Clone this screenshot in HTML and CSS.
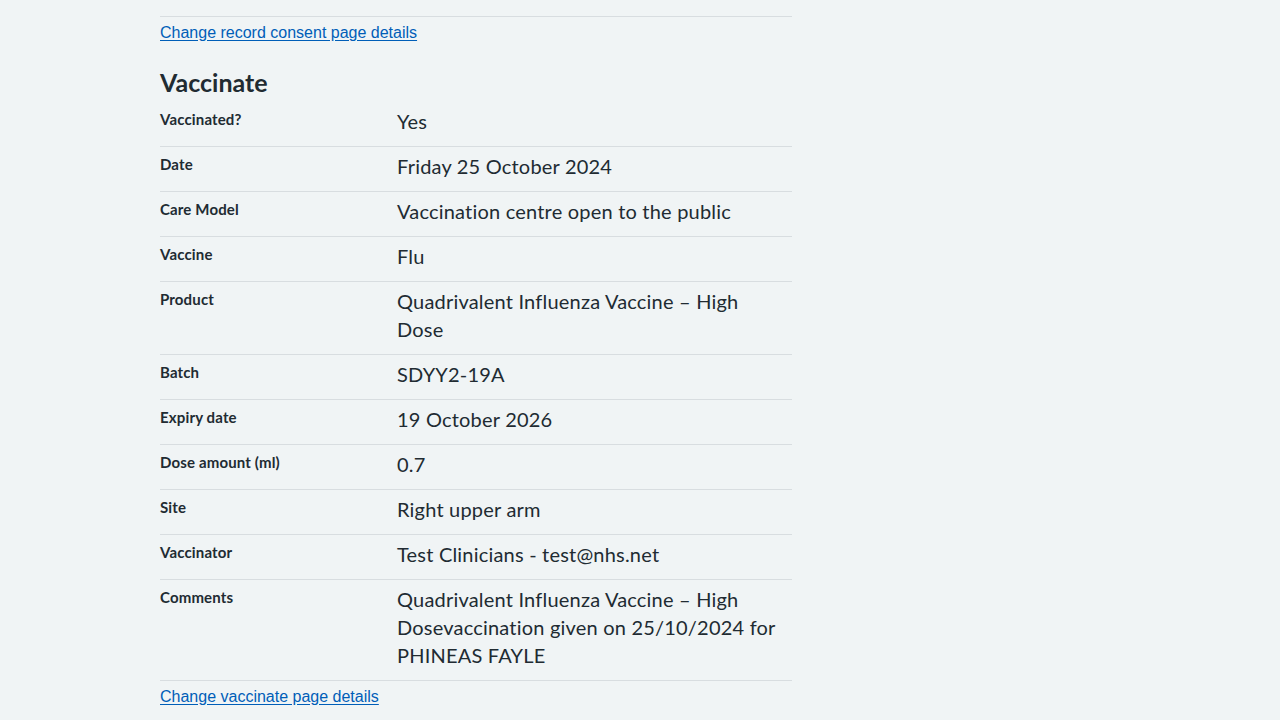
FILE: index.html
```html
<!DOCTYPE html>
<html lang="en">
<head>
<meta charset="utf-8">
<title>Check and confirm</title>
<link rel="stylesheet" href="styles.css">
</head>
<body>
<main class="page">
  <div class="link-block">
    <a class="change-link" href="#">Change record consent page details</a>
  </div>

  <h2 class="section-title">Vaccinate</h2>
  <dl class="summary">
    <div class="row"><dt class="key">Vaccinated?</dt><dd class="value">Yes</dd></div>
    <div class="row"><dt class="key">Date</dt><dd class="value">Friday 25 October 2024</dd></div>
    <div class="row"><dt class="key">Care Model</dt><dd class="value">Vaccination centre open to the public</dd></div>
    <div class="row"><dt class="key">Vaccine</dt><dd class="value">Flu</dd></div>
    <div class="row"><dt class="key">Product</dt><dd class="value">Quadrivalent Influenza Vaccine – High Dose</dd></div>
    <div class="row"><dt class="key">Batch</dt><dd class="value">SDYY2-19A</dd></div>
    <div class="row"><dt class="key">Expiry date</dt><dd class="value">19 October 2026</dd></div>
    <div class="row"><dt class="key">Dose amount (ml)</dt><dd class="value">0.7</dd></div>
    <div class="row"><dt class="key">Site</dt><dd class="value">Right upper arm</dd></div>
    <div class="row"><dt class="key">Vaccinator</dt><dd class="value">Test Clinicians - test@nhs.net</dd></div>
    <div class="row"><dt class="key">Comments</dt><dd class="value">Quadrivalent Influenza Vaccine – High Dosevaccination given on 25/10/2024 for PHINEAS FAYLE</dd></div>
  </dl>
  <div class="link-block link-block-last">
    <a class="change-link" href="#">Change vaccinate page details</a>
  </div>
</main>
</body>
</html>
```

FILE: styles.css
```css
html, body {
  margin: 0;
  padding: 0;
  background: #f0f4f5;
}

body {
  color: #212b32;
  font-family: Lato, "Noto Sans", sans-serif;
}

.page {
  width: 632px;
  margin-left: 160px;
  padding-top: 16px;
}

.link-block {
  border-top: 1px solid #d8dde0;
  padding-top: 4px;
}

.link-block-last {
  border-top: none;
  padding-top: 4px;
}

.change-link {
  display: inline-block;
  font-family: "Liberation Sans", Arial, sans-serif;
  font-size: 16px;
  line-height: 24px;
  color: #005eb8;
  text-decoration: underline;
  text-underline-offset: 2px;
}

.section-title {
  margin: 21px 0 4px;
  font-size: 25px;
  line-height: 32px;
  font-weight: 700;
}

.summary {
  margin: 0;
}

.row {
  display: grid;
  grid-template-columns: 237px 1fr;
  border-bottom: 1px solid #d8dde0;
}

.key {
  margin: 0;
  padding: 6px 16px 1px 0;
  font-size: 15px;
  line-height: 22px;
  font-weight: 700;
  letter-spacing: 0.15px;
}

.value {
  margin: 0;
  padding: 5px 10px 11px 0;
  font-size: 20px;
  line-height: 28px;
  letter-spacing: 0.2px;
}
```
